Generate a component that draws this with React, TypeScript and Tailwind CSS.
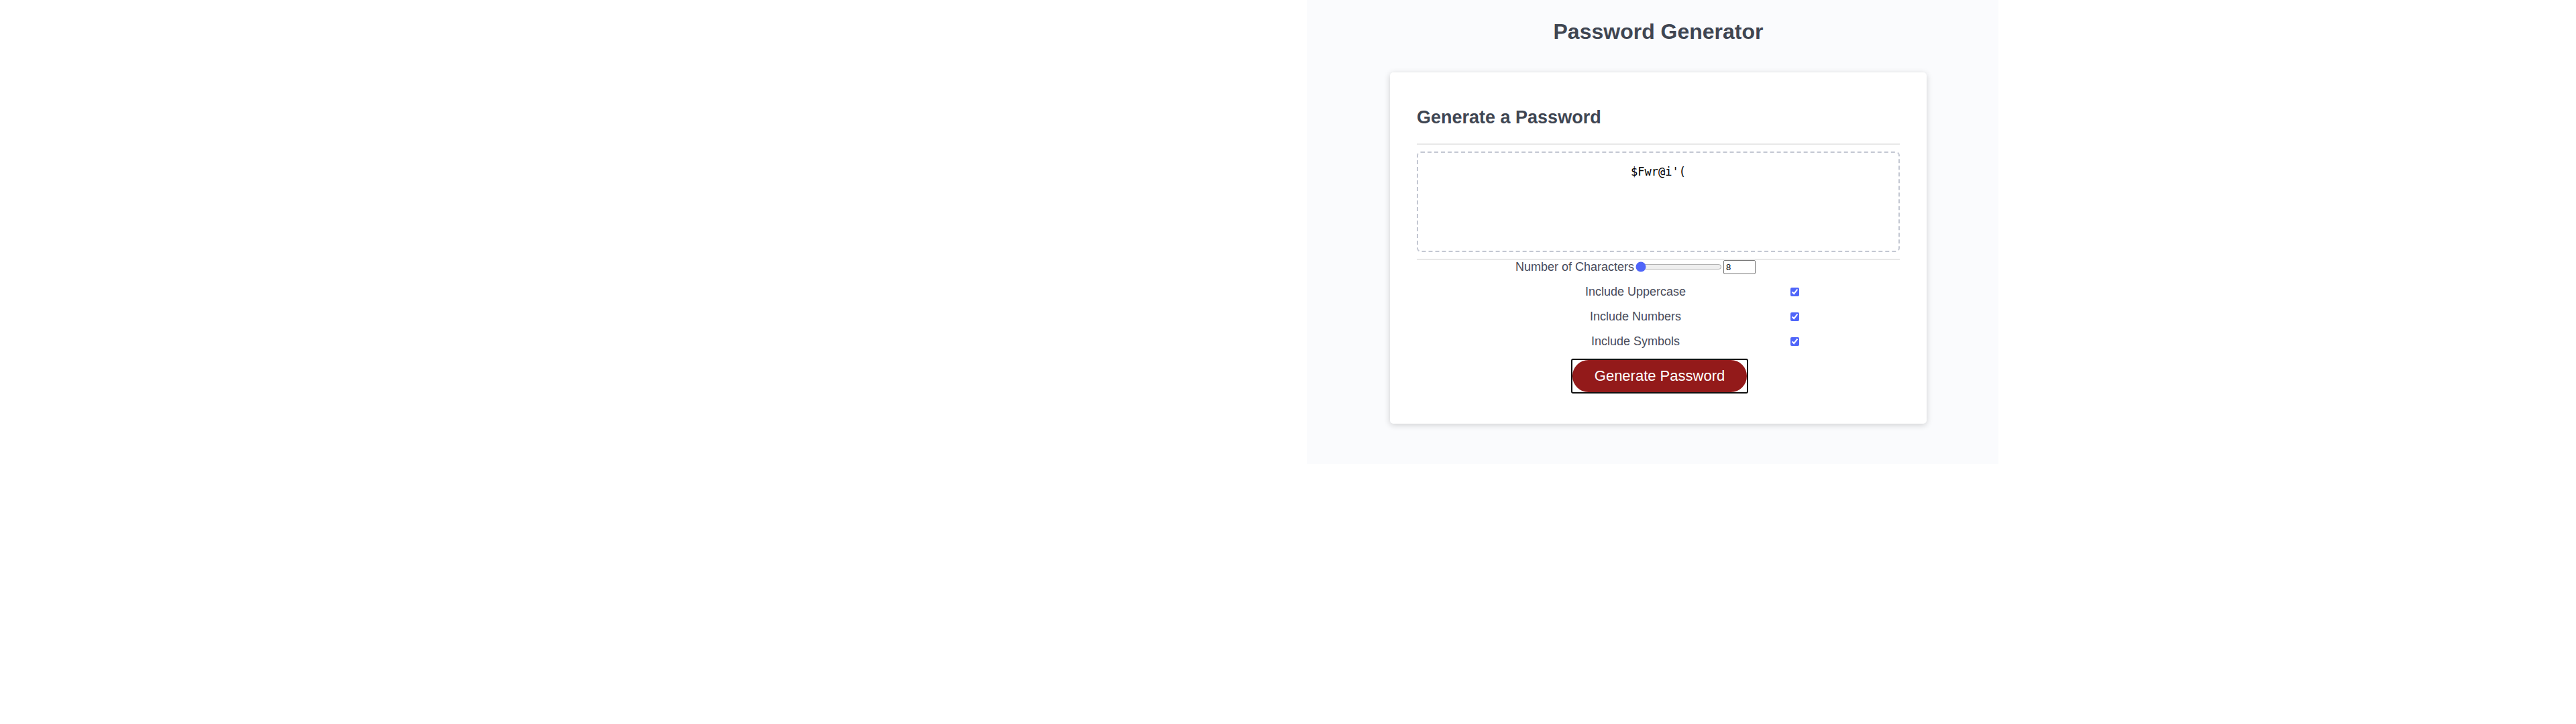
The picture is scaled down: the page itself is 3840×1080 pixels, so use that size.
import { useState } from "react";

const OPTIONS = [
  { id: "uppercase", label: "Include Uppercase" },
  { id: "numbers", label: "Include Numbers" },
  { id: "symbols", label: "Include Symbols" },
];

export default function App() {
  const [length, setLength] = useState(8);

  return (
    <div className="grid min-h-screen grid-cols-[1948fr_1031fr_861fr] items-start bg-white font-['Liberation_Sans',Arial,sans-serif] text-[18px] text-[#474b5b]">
      <main className="col-start-2 bg-[#fafbfd] pb-[60px] pl-[17px]">
        <h1 className="pt-[27px] pb-[41px] text-center text-[32px] leading-10 font-bold text-[#3f4652]">
          Password Generator
        </h1>

        <section className="mx-auto max-w-[800px] rounded-[5px] bg-white px-10 pt-10 pb-[45px] shadow-[0_2px_10px_rgba(0,0,0,0.18)]">
          <h2 className="pt-2.5 pb-[22px] text-[27px] leading-[34px] font-bold text-[#3f4652]">Generate a Password</h2>

          <div className="border-y-2 border-[#e8e8e8] py-2.5">
            <textarea
              readOnly
              aria-label="Your secure password"
              defaultValue="$Fwr@i'("
              className="block h-[150px] w-full resize-none rounded-md border-2 border-dashed border-[#c3c7d2] bg-white px-3 py-4 text-center font-['DejaVu_Sans_Mono',monospace] text-[17px] leading-6 text-black outline-none"
            />
          </div>

          <div className="mx-auto w-fit">
            <div className="flex h-[37px] items-start pr-[68px]">
              <label htmlFor="range" className="leading-5">
                Number of Characters
              </label>
              <input
                id="range"
                type="range"
                min={8}
                max={128}
                value={length}
                onChange={(e) => setLength(Number(e.target.value))}
                className="m-0.5 h-4 w-[129px] accent-[#4f65f9]"
              />
              <input
                type="number"
                aria-label="Character count"
                value={length}
                onChange={(e) => setLength(Number(e.target.value))}
                className="h-[21px] w-12 rounded-[2px] border border-[#767676] bg-white px-[3px] text-[13px] text-black outline-none"
              />
            </div>
            {OPTIONS.map((o) => (
              <div key={o.id} className="flex h-[37px] items-start last:h-9">
                <label htmlFor={o.id} className="flex-1 text-center leading-5">
                  {o.label}
                </label>
                <div className="flex w-[68px] justify-end pt-1 pr-[3px]">
                  <input id={o.id} type="checkbox" defaultChecked className="size-[13px] accent-[#4f65f9]" />
                </div>
              </div>
            ))}
          </div>

          <div className="flex justify-center pl-1">
            <div className="rounded-[3px] border-2 border-[#101010]">
              <button
                type="button"
                className="block h-12 w-[260px] rounded-full bg-[#931a1a] pb-0.5 text-[22px] text-white outline-none"
              >
                Generate Password
              </button>
            </div>
          </div>
        </section>
      </main>
    </div>
  );
}
